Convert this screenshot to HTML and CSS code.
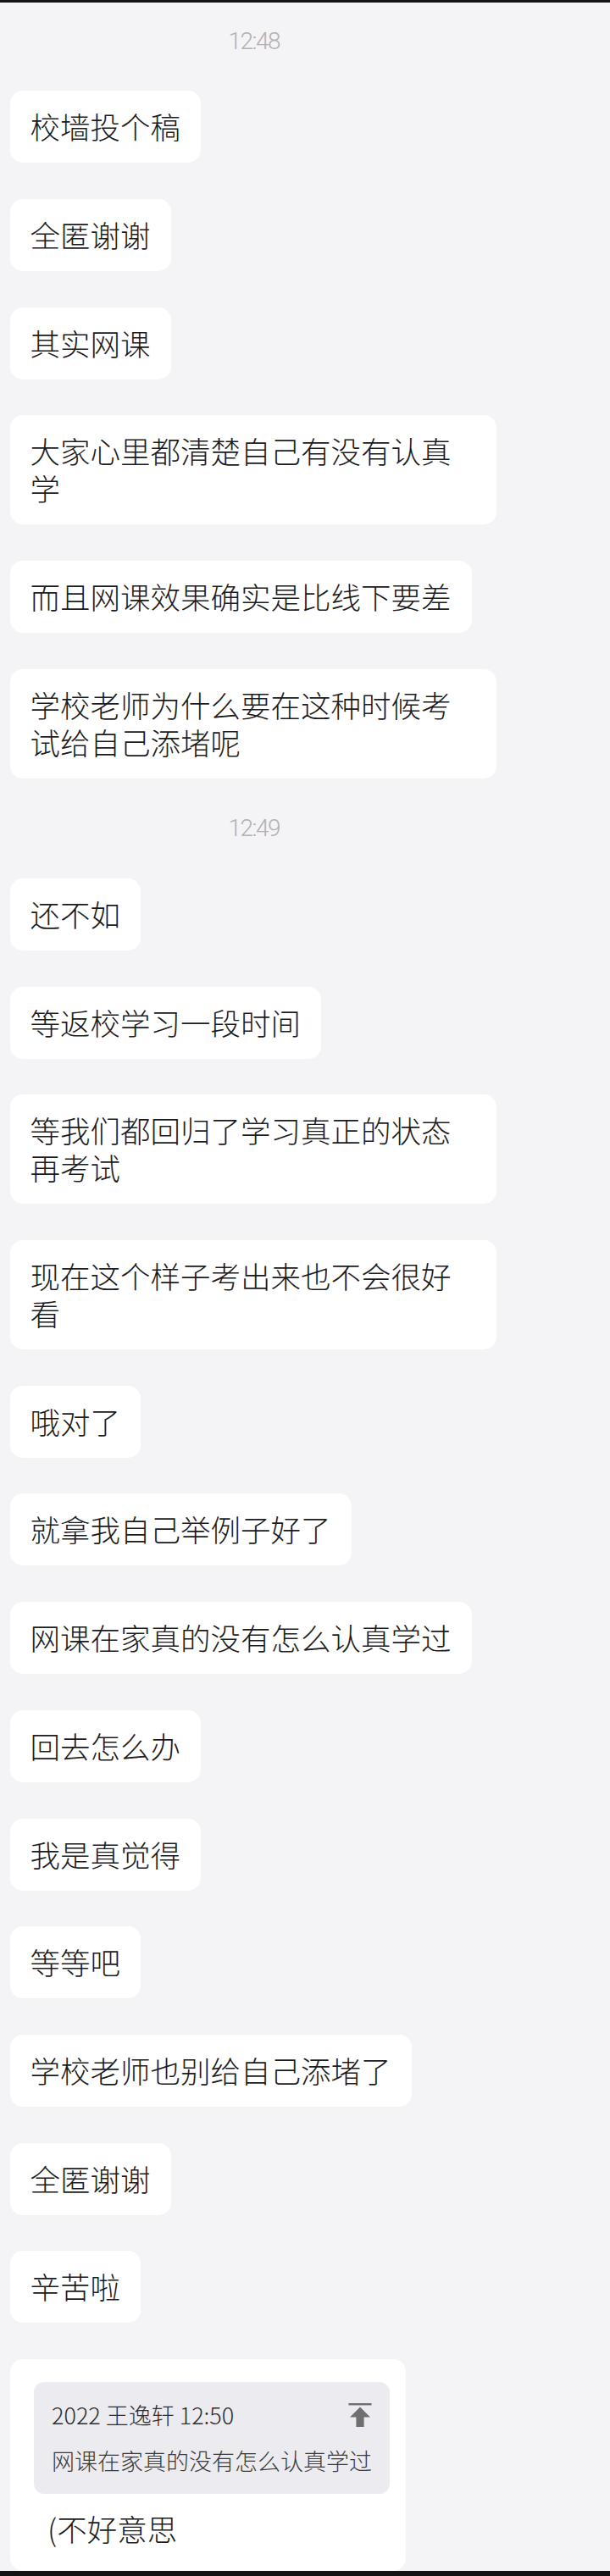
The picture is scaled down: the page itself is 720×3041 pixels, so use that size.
FILE: index.html
```html
<!DOCTYPE html>
<html lang="zh-CN">
<head>
<meta charset="utf-8">
<title>聊天记录</title>
<link rel="stylesheet" href="styles.css">
</head>
<body>
<div class="screen">
  <div class="bar bar-top"></div>
  <div class="chat">
    <div class="time">12:48</div>
    <div class="bubble">校墙投个稿</div>
    <div class="bubble">全匿谢谢</div>
    <div class="bubble">其实网课</div>
    <div class="bubble">大家心里都清楚自己有没有认真学</div>
    <div class="bubble">而且网课效果确实是比线下要差</div>
    <div class="bubble">学校老师为什么要在这种时候考试给自己添堵呢</div>
    <div class="time">12:49</div>
    <div class="bubble">还不如</div>
    <div class="bubble">等返校学习一段时间</div>
    <div class="bubble">等我们都回归了学习真正的状态再考试</div>
    <div class="bubble">现在这个样子考出来也不会很好看</div>
    <div class="bubble">哦对了</div>
    <div class="bubble">就拿我自己举例子好了</div>
    <div class="bubble">网课在家真的没有怎么认真学过</div>
    <div class="bubble">回去怎么办</div>
    <div class="bubble">我是真觉得</div>
    <div class="bubble">等等吧</div>
    <div class="bubble">学校老师也别给自己添堵了</div>
    <div class="bubble">全匿谢谢</div>
    <div class="bubble">辛苦啦</div>
    <div class="bubble bubble-quote">
      <div class="quote">
        <div class="quote-head">
          <span class="quote-meta">2022 王逸轩 12:50</span>
          <svg class="quote-icon" width="28" height="30" viewBox="0 0 28 30" aria-hidden="true">
            <rect x="0.5" y="1" width="27" height="2.4" fill="#6f6f72"/>
            <path d="M14 5.5 L26 17.5 L18.6 17.5 L18.6 29 L9.4 29 L9.4 17.5 L2 17.5 Z" fill="#6f6f72"/>
          </svg>
        </div>
        <div class="quote-text">网课在家真的没有怎么认真学过</div>
      </div>
      <div class="reply">(不好意思</div>
    </div>
  </div>
  <div class="bar bar-bottom"></div>
</div>
</body>
</html>
```

FILE: styles.css
```css
* {
  box-sizing: border-box;
}

html, body {
  margin: 0;
  padding: 0;
  background: #f4f3f6;
}

body {
  font-family: "Noto Sans CJK SC", "Noto Sans", "Liberation Sans", sans-serif;
  color: #1c1c1e;
}

.screen {
  width: 100%;
  height: 3041px;
  display: flex;
  flex-direction: column;
  overflow: hidden;
  background: #f4f3f6;
}

.bar {
  flex: none;
  background: #141414;
}

.bar-top {
  height: 3px;
}

.bar-bottom {
  height: 6px;
}

.chat {
  flex: 1;
  min-height: 0;
  overflow: hidden;
  display: flex;
  flex-direction: column;
  align-items: flex-start;
  gap: 42.7px;
  padding: 28.5px 0 0 11.5px;
}

.time {
  height: 33px;
  line-height: 33px;
  margin-left: 258px;
  font-family: Roboto, "Liberation Sans", sans-serif;
  font-weight: 300;
  font-size: 28px;
  letter-spacing: -1.5px;
  color: #b2b0b5;
}

.bubble {
  max-width: 574px;
  background: #ffffff;
  border-radius: 15px;
  padding: 20px 24px 21px 24px;
  font-size: 35.5px;
  line-height: 44px;
  font-weight: 300;
  word-break: break-all;
}

.bubble-quote {
  padding: 27px 19px 28px 28.5px;
}

.quote {
  background: #ecebef;
  border-radius: 12px;
  padding: 21px 21px 21px 21px;
}

.quote-head {
  display: flex;
  align-items: center;
  justify-content: space-between;
  height: 36px;
}

.quote-meta {
  font-size: 27px;
  line-height: 36px;
  font-weight: 300;
  color: #2e2e30;
}

.quote-icon {
  display: block;
  flex: none;
}

.quote-text {
  margin-top: 18px;
  font-size: 27px;
  line-height: 36px;
  font-weight: 300;
  color: #3a3a3c;
}

.reply {
  margin: 19px 0 0 16px;
  font-size: 35.5px;
  line-height: 44px;
}
```
